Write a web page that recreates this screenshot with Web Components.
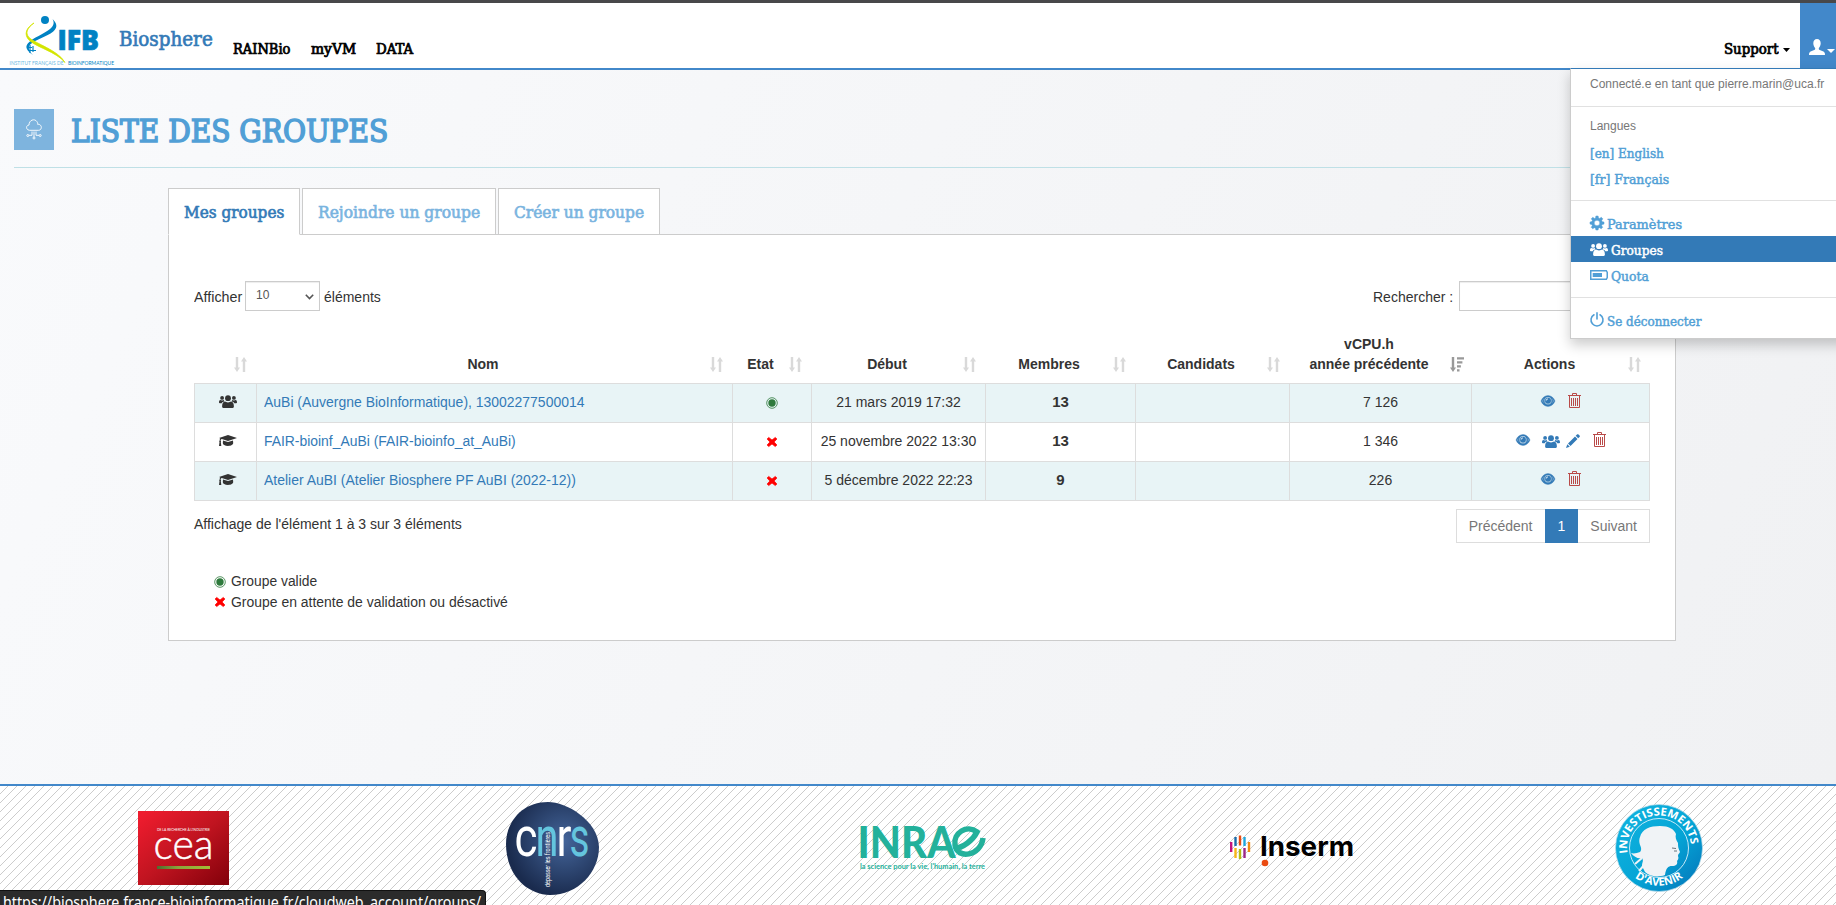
<!DOCTYPE html>
<html lang="fr">
<head>
<meta charset="utf-8">
<title>Biosphere - Groupes</title>
<style>
html,body{margin:0;height:100%}
body{font:14px/20px "Liberation Sans",Arial,sans-serif;color:#333;overflow:hidden}
</style>
</head>
<body>
<bio-app></bio-app>
<script>
const ICONS={
users:['0 0 18 13','<circle cx="9" cy="3.2" r="2.9"/><path d="M4.3 13c-.8 0-1.2-.6-1.2-1.4 0-2.6.9-5 2.9-5 .7 0 1.6 1 3 1s2.300-1 3-1c2 0 2.900 2.400 2.900 5 0 .8-.4 1.400-1.200 1.400z"/><circle cx="3.100" cy="2.900" r="1.900"/><circle cx="14.900" cy="2.900" r="1.900"/><path d="M0 7.600C0 6 .4 5 1.300 5c.5 0 1 .5 1.800.5.700 0 1.200-.300 1.700-.400.100.7.300 1.100.6 1.400-1.300.1-2.200.600-2.800 1.700H.9C.3 8.200 0 8 0 7.600zM18 7.600c0-1.600-.4-2.600-1.300-2.600-.5 0-1 .5-1.800.5-.7 0-1.200-.3-1.700-.4-.1.7-.3 1.100-.6 1.400 1.300.1 2.200.6 2.800 1.700h1.700c.6 0 .9-.2.900-.6z"/>'],
cap:['0 0 18 11','<path d="M9 0l9 2.900-9 3L2.800 3.900c-.9.300-1.200 1-1.200 1.900.5.300.6.900.2 1.300L2.300 11H0l.5-3.900c-.4-.4-.3-1 .1-1.300 0-.8.200-1.600.7-2.200L0 2.900zM4 5.500l5 1.600 5-1.600.2 2.600C14.300 9.700 12 11 9 11S3.700 9.700 3.800 8.100z"/>'],
eye:['0 0 14 12','<path fill-rule="evenodd" stroke="currentColor" stroke-width=".4" d="M7 .6C3.900.6 1.200 2.700 0 6c1.200 3.300 3.900 5.400 7 5.400s5.800-2.100 7-5.400C12.800 2.700 10.100.6 7 .6zm0 1.500a3.700 3.700 0 0 1 3.600 3.700A3.600 3.600 0 0 1 7 9.500a3.600 3.600 0 0 1-3.600-3.700A3.700 3.700 0 0 1 7 2.100zM2.900 3.300a4.700 4.700 0 0 0 0 5.200A8 8 0 0 1 1.300 6a8 8 0 0 1 1.600-2.700zm8.200 0A8 8 0 0 1 12.700 6a8 8 0 0 1-1.600 2.500 4.700 4.700 0 0 0 0-5.200z"/><circle cx="7" cy="5.700" r="3"/><path d="M5.200 5.600A1.700 1.700 0 0 1 7 3.900" fill="none" stroke="#fff" stroke-width=".8"/>'],
trash:['0 0 13 15','<path fill="none" stroke="currentColor" d="M0 2.500h13M4.500 2.500v-2h4v2M1.500 2.500v12h10v-12M3.500 5v8M5.500 5v8M7.500 5v8M9.500 5v8"/>'],
pencil:['0 0 14 14','<path d="M11 .5c.4-.5 1.100-.5 1.500 0l1 1c.5.400.5 1.100 0 1.500l-1.300 1.300-2.500-2.500zM9 2.500L11.500 5 4.500 12 2 9.500zM1.300 10.200l2.500 2.500L0 14z"/>'],
gear:['0 0 14 14','<path fill-rule="evenodd" stroke="currentColor" stroke-width=".5" d="M5.900 0h2.200l.4 1.900 1.200.5L11.300 1.300l1.500 1.500-1.100 1.600.5 1.300 1.800.3v2.100l-1.900.4-.5 1.200 1.100 1.600-1.500 1.500-1.600-1.100-1.200.5L8.100 14H5.900l-.4-1.800-1.200-.5-1.600 1.100-1.500-1.500 1.100-1.600-.5-1.200L0 8.100V6l1.900-.4.500-1.200-1.100-1.600 1.500-1.500 1.600 1.100 1.200-.5zM7 4.200a2.800 2.800 0 1 0 0 5.600 2.800 2.800 0 0 0 0-5.600z"/>'],
battery:['0 0 18 10','<path fill="none" stroke="currentColor" stroke-width="1.500" d="M.75.75h15.600l.9 1.600v5.300l-.9 1.600H.75z"/><path d="M2.700 3h9.300v4H2.700z"/>'],
power:['0 0 14 15','<path fill="none" stroke="currentColor" stroke-width="1.600" stroke-linecap="round" d="M4 2.800a6 6 0 1 0 6 0M7 .900v6"/>'],
user:['0 0 16 16','<path d="M8 0C5.700 0 4.300 1.700 4.300 4.200c0 1.800.7 3.600 1.800 4.700.3 1 .1 1.800-.9 2.200L1.600 12.600C.6 13.100 0 14 0 16h16c0-2-.6-2.900-1.600-3.400l-3.600-1.500c-1-.4-1.200-1.200-.9-2.200 1.100-1.100 1.800-2.900 1.800-4.700C11.700 1.700 10.300 0 8 0z"/>'],
sort:['0 0 13 15','<path d="M1.800 0h2.400v10.500H6L3 15 0 10.500h1.800zM8.800 15h2.400V4.500H13L10 0 7 4.500h1.800z"/>'],
sortdesc:['0 0 14 15','<path d="M1.800 0h2.400v10.500H6L3 15 0 10.500h1.800zM7 .3h7v2.200H7zM7 4.300h5.400v2.200H7zM7 8.300h3.900v2.200H7zM7 12.300h2.500v2.200H7z"/>'],
cloud:['0 0 16 21','<g fill="none" stroke="#fff" stroke-width=".9"><path d="M3.500 11.300C-.3 11-.3 6.200 3 6 3 1 8.500-.9 10.900 2.600c.9 1.200.8 2 .7 2.700 4.800-.4 4.800 6 .9 6z"/><path d="M6 12.500v3.800H3M8 12.500v5.500M10 12.500v3.800h3"/><circle cx="8" cy="19" r="1"/><circle cx="1.800" cy="16.500" r="1"/><circle cx="14.200" cy="16.500" r="1"/></g>'],
target:['0 0 12 12','<circle cx="6" cy="6" r="5.300" fill="none" stroke="currentColor" stroke-width=".8"/><circle cx="6" cy="6" r="3.700"/>'],
cross:['0 0 12 10','<path stroke="currentColor" stroke-width=".7" d="M2.700.4L6 3 9.300.4l1.600 1.600L8.100 5l2.800 3-1.600 1.600L6 7 2.700 9.600 1.100 8l2.800-3-2.800-3z"/>'],
chevron:['0 0 9 6','<path fill="none" stroke="currentColor" stroke-width="1.600" d="M.8.800l3.700 3.700L8.200.8"/>'],
caret:['0 0 8 4','<path d="M0 0h8L4 4z"/>']
};
function define(name,html,init){
  customElements.define(name,class extends HTMLElement{
    connectedCallback(){
      if(this.shadowRoot)return;
      this.attachShadow({mode:'open'}).innerHTML=typeof html==='function'?html(this):html;
      if(init)init(this);
    }
  });
}
const slab='font-family:"DejaVu Serif Condensed","DejaVu Serif",serif';

/* Inline icon: name and pixel size */
define('bio-icon',e=>{const [vb,body]=ICONS[e.getAttribute('name')],d=vb.split(' ');
  return `<style>:host{display:inline-block;width:${e.getAttribute('w')||d[2]}px;height:${e.getAttribute('h')||d[3]}px;flex:none}svg{display:block;width:100%;height:100%;fill:currentColor;overflow:visible}</style><svg viewBox="${vb}" preserveAspectRatio="none">${body}</svg>`});

/* One line of text condensed or stretched to a given width */
define('fit-text',e=>`<style>:host{display:inline-block;white-space:nowrap;width:${e.getAttribute('w')}px;flex:none}span{display:inline-block;transform-origin:0 50%}</style><span><slot></slot></span>`,
  e=>{const s=e.shadowRoot.querySelector('span');s.style.transform=`scaleX(${e.getAttribute('w')/s.offsetWidth})`});

define('ifb-logo',`<style>:host{display:block;width:107px;height:52px}svg{display:block;overflow:visible}</style>
<svg width="107" height="52" viewBox="9 15 107 52">
<circle cx="45" cy="20" r="4" fill="#0082c3"/>
<path d="M52.500 19c4 4 6 8 .5 12.800-6 5-17 7.500-23 13-2 2-1.500 6.700 3 10.200-6-4-8.500-8-5-11.800 5-5.500 16-9.200 22-14.200 4-3.500 4.500-6.500 2.500-10z" fill="#0082c3"/>
<path d="M34 23c-7 5-9 10-5 14.500 6 6 29 12.500 36 25-9-11-29-15-36.500-23C24 34 26 28 34 23z" fill="#d3e500" stroke="#d3e500" stroke-width=".8"/>
<path d="M27 47.500h5M28 50.500h8M30 45v8M33 46v6" stroke="#0082c3" stroke-width="1.200"/>
<text x="57.500" y="50.300" font-family="Open Sans,Noto Sans,sans-serif" font-size="27.500" font-weight="800" fill="#0082c3" textLength="41.500" lengthAdjust="spacingAndGlyphs" stroke="#0082c3" stroke-width=".7">IFB</text>
<text x="9.500" y="64.700" font-family="Lato,sans-serif" font-size="6" fill="#6db8df" textLength="54" lengthAdjust="spacingAndGlyphs">INSTITUT FRANÇAIS DE</text>
<text x="68" y="64.700" font-family="Lato,sans-serif" font-size="6" fill="#0082c3" textLength="46" lengthAdjust="spacingAndGlyphs">BIOINFORMATIQUE</text>
</svg>`);

define('bio-header',`<style>
:host{display:flex;height:65px;box-sizing:content-box;border-top:3px solid #48484a;border-bottom:2px solid #4288ca;background:#fff;padding-left:9px;${slab}}
ifb-logo{margin-top:12px}
.brand{margin:22px 0 0 3px;font-size:19.500px;line-height:30px;color:#337ab7;-webkit-text-stroke:.6px}
nav{display:flex;gap:20.500px;margin-left:20px;padding-top:36px;font-size:14px;line-height:20px;color:#000;-webkit-text-stroke:.7px}
.sup{margin-left:auto;padding:36px 10px 0 0;display:flex;gap:4px;color:#000;font-size:14px;-webkit-text-stroke:.7px}
.sup bio-icon{margin-top:9px}
.usr{width:36px;height:66px;margin-bottom:-1px;background:#4288ca;color:#fff;display:flex;box-sizing:border-box;padding:36px 0 0 9px;gap:2px}
.usr .c{margin-top:10px}
</style><ifb-logo></ifb-logo><fit-text class="brand" w="94">Biosphere</fit-text>
<nav><fit-text w="57">RAINBio</fit-text><fit-text w="45">myVM</fit-text><fit-text w="37">DATA</fit-text></nav>
<div class="sup"><fit-text w="55">Support</fit-text><bio-icon name="caret" w="7"></bio-icon></div>
<div class="usr"><bio-icon name="user"></bio-icon><bio-icon class="c" name="caret"></bio-icon></div>`);

define('page-title',`<style>
:host{display:flex;margin:39px 14px 0;height:58px;border-bottom:1px solid #bfe0e6;color:#519fd6;${slab}}
.sq{width:40px;height:41px;background:#7eb4de;display:flex;align-items:center;justify-content:center}
h1{margin:2px 0 0 17px;font-size:32.500px;line-height:40px;font-weight:400;-webkit-text-stroke:1.500px}
</style><div class="sq"><bio-icon name="cloud"></bio-icon></div><h1><fit-text w="317"><slot></slot></fit-text></h1>`);

define('tab-item',`<style>
:host{display:block;box-sizing:border-box;height:47px;padding:14px 15px 0;background:#fff;border:1px solid #ccc;color:#7ab4df;font-size:16.500px;line-height:20px;${slab};-webkit-text-stroke:.6px}
:host([active]){color:#337ab7;border-bottom-color:#fff}
</style><slot></slot>`);

define('page-size',`<style>
:host{display:flex;line-height:20px}
.s{display:flex;box-sizing:border-box;width:75px;height:30px;margin:-6px 4px 0 3px;border:1px solid #ccc;padding:3px 5px 0 10px;justify-content:space-between;font-size:12px;color:#555;background:#fff;box-shadow:inset 0 1px 1px #00000013}
.s bio-icon{margin-top:9px}
</style><fit-text w="48">Afficher</fit-text><div class="s">10<bio-icon name="chevron"></bio-icon></div><fit-text w="57">éléments</fit-text>`);

define('search-box',`<style>
:host{display:flex}
.i{box-sizing:border-box;width:191px;height:30px;margin:-6px 0 0 6px;border:1px solid #ccc;background:#fff;box-shadow:inset 0 1px 1px #00000013}
</style><fit-text w="80">Rechercher :</fit-text><div class="i"></div>`);

const COLS='grid-template-columns:62px 476px 79px 174px 150px 154px 182px 179px';
define('th-cell',`<style>
:host{display:flex;align-items:flex-end;position:relative;box-sizing:border-box;padding:0 30px 9px 8px;text-align:center;font-weight:700}
div{flex:1}
bio-icon{position:absolute;right:9px;bottom:11px;color:#d9d9d9}
:host([desc]) bio-icon{color:#999;right:7px}
</style><div><slot></slot></div><bio-icon name="sort"></bio-icon>`,e=>{if(e.hasAttribute('desc')){const i=document.createElement('bio-icon');i.setAttribute('name','sortdesc');e.shadowRoot.querySelector('bio-icon').replaceWith(i)}});

define('group-row',e=>{const a=n=>e.getAttribute(n),full=e.hasAttribute('full');
return `<style>
:host{display:grid;${COLS};box-sizing:border-box;height:39px;border-bottom:1px solid #ddd;background:#fff;text-align:center}
:host([odd]){background:#e8f4f6}
div{border-left:1px solid #ddd;padding:8px 0 0;box-sizing:border-box;min-width:0}
div:last-child{border-right:1px solid #ddd}
.n{text-align:left;padding-left:7px;color:#337ab7}
.ic{display:flex;justify-content:center;align-items:center;padding:0 0 3px 5px}
.et{display:flex;justify-content:center;align-items:center;padding:0 0 1px}
b{font-size:15px}
.a{display:flex;justify-content:center;padding:9px 0 0;color:#337ab7}
.a bio-icon[name=eye]{margin-top:2px}
.a bio-icon[name=users]{margin:3px 0 0 12px}
.a bio-icon[name=pencil]{margin:2px 0 0 6px}
.a bio-icon[name=trash]{color:#b94a48;margin-left:13px}
</style><div class="ic"><bio-icon name="${a('icon')}"></bio-icon></div><div class="n"><fit-text w="${a('w')}">${a('name')}</fit-text></div>
<div class="et"><bio-icon name="${a('state')}" style="color:${a('state')=='cross'?'#f00':'#2e7a3c'}"></bio-icon></div>
<div>${a('date')}</div><div><b>${a('members')}</b></div><div></div><div>${a('cpu')}</div>
<div class="a"><bio-icon name="eye"></bio-icon>${full?'<bio-icon name="users"></bio-icon><bio-icon name="pencil"></bio-icon>':''}<bio-icon name="trash"></bio-icon></div>`});

define('groups-table',`<style>
:host{display:block;margin-top:12px}
.h{display:grid;${COLS};height:60px;border-bottom:1px solid #ddd}
</style><div class="h"><th-cell></th-cell><th-cell>Nom</th-cell><th-cell>Etat</th-cell><th-cell>Début</th-cell><th-cell>Membres</th-cell><th-cell>Candidats</th-cell><th-cell desc>vCPU.h<br>année précédente</th-cell><th-cell>Actions</th-cell></div>
<group-row odd icon="users" name="AuBi (Auvergne BioInformatique), 13002277500014" w="320" state="target" date="21 mars 2019 17:32" members="13" cpu="7 126"></group-row>
<group-row full icon="cap" name="FAIR-bioinf_AuBi (FAIR-bioinfo_at_AuBi)" w="252" state="cross" date="25 novembre 2022 13:30" members="13" cpu="1 346"></group-row>
<group-row odd icon="cap" name="Atelier AuBI (Atelier Biosphere PF AuBI (2022-12))" w="312" state="cross" date="5 décembre 2022 22:23" members="9" cpu="226"></group-row>`);

define('page-nav',`<style>
:host{display:flex;height:34px;color:#777;line-height:20px}
span{box-sizing:border-box;border:1px solid #ddd;padding:6px 12px;background:#fff}
.p{border-right:0}.s{border-left:0}
.c{background:#337ab7;border-color:#337ab7;color:#fff;padding:6px 12px}
</style><span class="p">Précédent</span><span class="c">1</span><span class="s">Suivant</span>`);

define('state-legend',`<style>
:host{display:block;padding:0 20px}
div{display:flex;height:21px;gap:5px}
bio-icon{margin-top:5px}
</style><div><bio-icon name="target" style="color:#2e7a3c"></bio-icon><fit-text w="86">Groupe valide</fit-text></div>
<div><bio-icon name="cross" style="color:#f00"></bio-icon><fit-text w="277">Groupe en attente de validation ou désactivé</fit-text></div>`);

define('groups-panel',`<style>
:host{display:block;margin:20px 160px 0 168px}
.tabs{display:flex;gap:2px;position:relative;margin-bottom:-1px;z-index:1}
.body{box-sizing:border-box;height:407px;border:1px solid #ccc;background:#fff;padding:52px 25px 0}
.bar,.foot{display:flex;justify-content:space-between}
.foot{margin-top:8px}.foot fit-text{margin-top:5px}
state-legend{margin-top:28px}
</style><div class="tabs"><tab-item active><fit-text w="100">Mes groupes</fit-text></tab-item><tab-item><fit-text w="162">Rejoindre un groupe</fit-text></tab-item><tab-item><fit-text w="130">Créer un groupe</fit-text></tab-item></div>
<div class="body"><div class="bar"><page-size></page-size><search-box></search-box></div>
<groups-table></groups-table>
<div class="foot"><fit-text w="268">Affichage de l'élément 1 à 3 sur 3 éléments</fit-text><page-nav></page-nav></div>
<state-legend></state-legend></div>`);

define('user-menu',`<style>
:host{display:block;position:absolute;top:68px;left:1570px;width:300px;box-sizing:border-box;height:271px;background:#fff;border:1px solid #ccc;border-top-color:#337ab7;box-shadow:0 6px 12px rgba(0,0,0,.2);padding:5px 0;background-clip:padding-box}
.h{font-size:12px;line-height:17px;padding:2px 19px 4px;color:#777}
.l{height:23px;box-sizing:border-box}
hr{height:1px;margin:9px 0;background:#e1e1e1;border:0}
.i{display:flex;height:26px;box-sizing:border-box;padding:5px 19px 1px;gap:4px;color:#519fd6;font-size:13px;line-height:20px;${slab};-webkit-text-stroke:.45px}
.i bio-icon{margin:1px -1px 0 0}
.on{background:#337ab7;color:#fff}
</style><div class="h"><fit-text w="234">Connecté.e en tant que pierre.marin@uca.fr</fit-text></div><hr>
<div class="h l"><fit-text w="46">Langues</fit-text></div>
<div class="i"><fit-text w="74">[en] English</fit-text></div><div class="i"><fit-text w="79">[fr] Français</fit-text></div><hr>
<div class="i"><bio-icon name="gear"></bio-icon><fit-text w="75">Paramètres</fit-text></div>
<div class="i on"><bio-icon name="users" style="margin-top:2px"></bio-icon><fit-text w="52">Groupes</fit-text></div>
<div class="i"><bio-icon name="battery" style="margin-top:3px"></bio-icon><fit-text w="38">Quota</fit-text></div><hr>
<div class="i"><bio-icon name="power" style="margin-top:0"></bio-icon><fit-text w="94">Se déconnecter</fit-text></div>`);

define('partner-logos',`<style>
:host{display:block;height:119px;border-top:2px solid #4288ca;background:#fff url("data:image/svg+xml,%3Csvg xmlns='http://www.w3.org/2000/svg' width='9' height='9' shape-rendering='crispEdges'%3E%3Cpath fill='%23ccc' d='M7 0h1v1h-1zM6 1h1v1h-1zM5 2h1v1h-1zM4 3h1v1h-1zM3 4h1v1h-1zM2 5h1v1h-1zM1 6h1v1h-1zM0 7h1v1h-1zM8 8h1v1h-1z'/%3E%3C/svg%3E")}
.r{display:flex;padding-left:138px}
svg{display:block;flex:none;overflow:visible}
</style><div class="r">
<svg width="91" height="74" style="margin-top:25px" viewBox="0 0 91 74"><defs><linearGradient id="c" x2="1" y2="1"><stop offset=".05" stop-color="#ee1c2e"/><stop offset=".5" stop-color="#c01420"/><stop offset="1" stop-color="#82000a"/></linearGradient><linearGradient id="g"><stop stop-color="#4e6b2e"/><stop offset=".4" stop-color="#8aa53c"/><stop offset="1" stop-color="#a3bd36"/></linearGradient></defs><path fill="url(#c)" d="M0 0h91v74H0z"/>
<text x="19" y="19.500" font-family="Lato,sans-serif" font-size="3.200" fill="#fff" textLength="53" lengthAdjust="spacingAndGlyphs">DE LA RECHERCHE À L'INDUSTRIE</text>
<text x="15.500" y="47.500" font-family="Lato,sans-serif" font-size="42" font-weight="300" fill="#fff" stroke="#fff" stroke-width=".5" textLength="60" lengthAdjust="spacingAndGlyphs">cea</text><path fill="url(#g)" d="M19 55h53v3H19z"/></svg>
<svg width="93" height="93" style="margin:16px 0 0 277px" viewBox="0 0 93 93"><defs><radialGradient id="n" cx=".62" cy=".42" r=".6"><stop stop-color="#44659a"/><stop offset="1" stop-color="#1a2b4e"/></radialGradient></defs><path fill="url(#n)" d="M42 0C60 0 92 18 93 45 93 70 72 93 44 93 18 92 0 70 0 42 0 20 16 0 42 0z"/>
<g font-family="Roboto,sans-serif" font-size="56"><text x="8.500" y="54" fill="#fff" textLength="23" lengthAdjust="spacingAndGlyphs">c</text><text x="29.500" y="54" fill="#64c5de" textLength="23" lengthAdjust="spacingAndGlyphs">n</text><text x="50.500" y="54" fill="#fff" textLength="15" lengthAdjust="spacingAndGlyphs">r</text><text x="63.500" y="54" fill="#64c5de" textLength="20" lengthAdjust="spacingAndGlyphs">s</text></g>
<text transform="translate(43.500 85) rotate(-90)" font-family="Roboto,sans-serif" font-size="6.500" fill="#fff" textLength="55" lengthAdjust="spacingAndGlyphs">dépasser les frontières</text></svg>
<svg width="125" height="46" style="margin:40px 0 0 261px" viewBox="0 0 125 46"><text x="-2.500" y="32" font-family="Lato,sans-serif" font-weight="900" font-size="44" fill="#23b19b" textLength="98" lengthAdjust="spacingAndGlyphs">INRA</text><path d="M95 22c8 0 18-8 22-16-10-8-24 1-22 13 2 15 26 11 28-7" fill="none" stroke="#23b19b" stroke-width="5.500"/>
<text x="0" y="43" font-family="Lato,sans-serif" font-size="7.500" font-weight="700" fill="#23b19b" textLength="125" lengthAdjust="spacingAndGlyphs">la science pour la vie, l'humain, la terre</text></svg>
<svg width="123" height="32" style="margin:49px 0 0 245px" viewBox="0 0 123 32"><g stroke-width="2.400"><path stroke="#c4127c" d="M1.200 7v10"/><path stroke="#1b6aa8" d="M5.500 2v9"/><path stroke="#ea4b12" d="M10 .5v10"/><path stroke="#1fa6dc" d="M14.500 2v9"/><path stroke="#f08a13" d="M19 7v10"/><path stroke="#f6b519" d="M5.500 13v10"/><path stroke="#b5bd12" d="M10 14v10"/><path stroke="#9c2687" d="M14.500 13v10"/></g><text x="30" y="20.500" font-family="Inter,sans-serif" font-weight="700" font-size="27.500" fill="#000" textLength="94" lengthAdjust="spacingAndGlyphs">Inserm</text><circle cx="35" cy="28" r="3.300" fill="#ea4b12"/></svg>
<svg width="88" height="88" style="margin:18px 0 0 262px" viewBox="0 0 88 88"><defs><linearGradient id="i" x2="1" y2="1"><stop stop-color="#12b4e0"/><stop offset=".55" stop-color="#05a5d6"/><stop offset="1" stop-color="#0472b8"/></linearGradient><path id="t" d="M12.500 49A32 32 0 1 1 75.500 49"/><path id="b" d="M6 53A39.500 39.500 0 0 0 82 53"/></defs>
<circle cx="44" cy="44" r="43.500" fill="url(#i)" stroke="#b9dbe8" stroke-width=".7"/><circle cx="44" cy="44" r="29.500" fill="none" stroke="#d8f1fa" stroke-width=".9"/>
<path fill="#f0f3f6" d="M25 33c2-8 10-11 20-11 9 0 14 3 16 8-1 3 0 6 2 9 0 3 0 5 2 9-1 2-2 2-2 4 1 2 0 4-1 5 1 3-1 5-5 5-4 0-6 2-7 9-8 3-16 1-20-3l-3-6c0-4 2-5 0-8-4 1-8-1-11-5 3 1 6 0 9-1 2-2 1-5 0-7-1-3-1-6 0-8z"/><path d="M57 44l4 .5M59 47h3" stroke="#6b747c" stroke-width="1"/><path d="M27 54l-7 6M30 60l-6 7" stroke="#f0f3f6" stroke-width="2"/>
<g font-family="Open Sans,sans-serif" font-weight="700" fill="#fff" font-size="11"><text textLength="103" lengthAdjust="spacingAndGlyphs"><textPath href="#t">INVESTISSEMENTS</textPath></text><text><textPath href="#b" startOffset="50%" text-anchor="middle">D'AVENIR</textPath></text></g></svg>
</div>`);

define('link-status',`<style>
:host{display:block;position:absolute;left:0;top:890px;width:486px;height:15px;overflow:hidden;background:#2b2b2b;border-top:1px solid #111;box-sizing:border-box;border-right:1px solid #111;border-radius:0 4px 0 0;color:#fff;font:16px/22px "Noto Sans","Open Sans",sans-serif;padding:0 0 0 3px}
</style><fit-text w="478">https://biosphere.france-bioinformatique.fr/cloudweb_account/groups/</fit-text>`);

define('bio-app',`<style>
:host{display:flex;flex-direction:column;width:1836px;height:905px;position:relative;overflow:hidden;background:#f5f6f8}
main{height:714px;background:linear-gradient(115deg,#f9fafc,#f0f1f3)}
main::before{content:"";display:table}
</style><bio-header></bio-header><main><page-title>LISTE DES GROUPES</page-title><groups-panel></groups-panel></main><partner-logos></partner-logos><user-menu></user-menu><link-status></link-status>`);
</script>
</body>
</html>
